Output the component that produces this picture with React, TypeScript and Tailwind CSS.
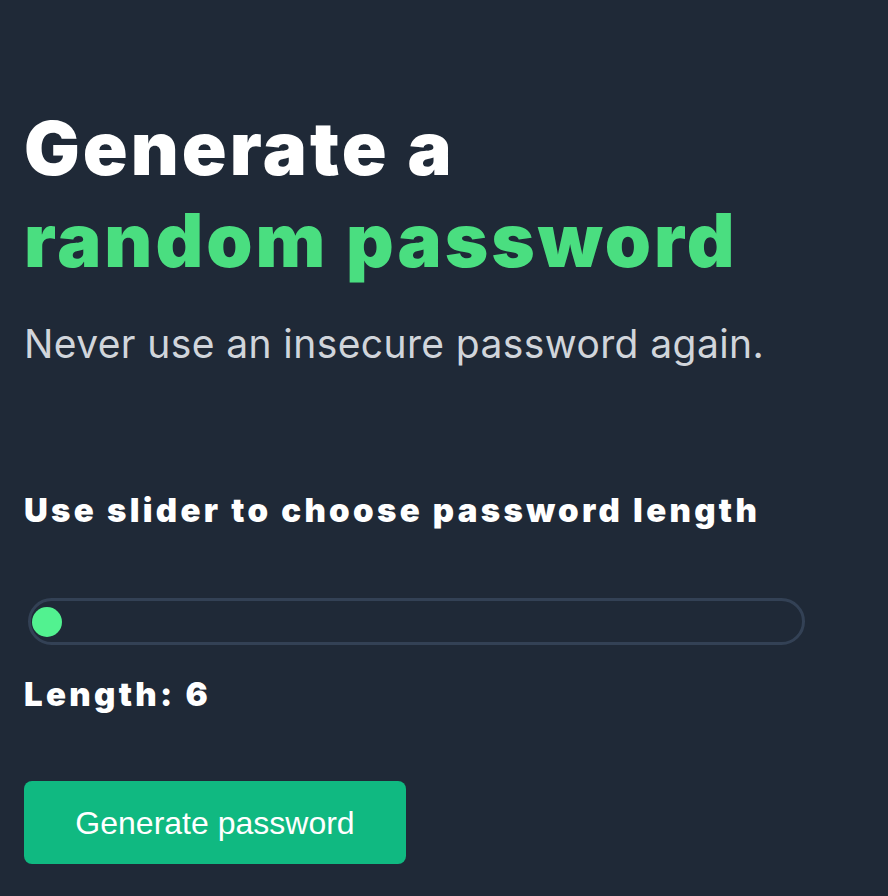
import React, { useState } from 'react';

const App: React.FC = () => {
  const [length] = useState(6);

  return (
    <div className="min-h-screen bg-[#1f2937] px-6 pt-[102px] font-['Inter',sans-serif]">
      <h1 className="text-[74px] leading-[92px] font-black tracking-[3px] text-white">
        Generate a
        <br />
        <span className="text-[#4ade80]">random password</span>
      </h1>
      <p className="mt-[35px] text-[39px] leading-[46px] tracking-[0.4px] text-[#d1d5db]">
        Never use an insecure password again.
      </p>

      <h2 className="mt-[123px] text-[33px] leading-[40px] font-black tracking-[3.3px] text-white">
        Use slider to choose password length
      </h2>

      <div className="mt-[68px] ml-1 flex h-[47px] w-[777px] items-center rounded-full border-[3px] border-[#334155] pl-px">
        <div className="h-[30px] w-[30px] rounded-full bg-[#52f290]" />
      </div>

      <p className="mt-[29px] text-[33px] leading-[40px] font-black tracking-[3.3px] text-white">
        Length: {length}
      </p>

      <button className="mt-[67px] h-[83px] w-[382px] rounded-lg bg-[#10b981] font-['Liberation_Sans',Arial,sans-serif] text-[32px] text-white">
        Generate password
      </button>
    </div>
  );
};

export default App;
